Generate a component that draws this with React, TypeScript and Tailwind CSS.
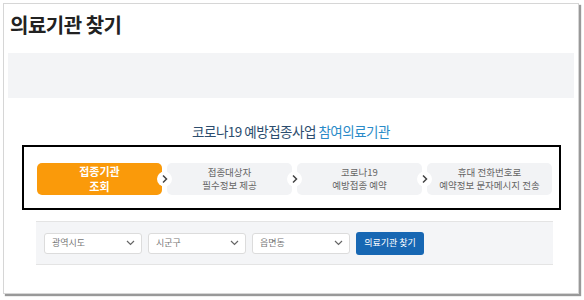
const steps = [
  { lines: ["접종대상자", "필수정보 제공"] },
  { lines: ["코로나19", "예방접종 예약"] },
  { lines: ["휴대 전화번호로", "예약정보 문자메시지 전송"] },
];

function Chevron() {
  return (
    <span className="absolute -left-[10px] top-1/2 -translate-y-1/2 flex h-[15px] w-[15px] items-center justify-center rounded-full bg-white z-10">
      <svg width="6" height="9" viewBox="0 0 6 9" fill="none">
        <path d="M1 1l3.5 3.5L1 8" stroke="#444" strokeWidth="1.5" />
      </svg>
    </span>
  );
}

function Select({ label }: { label: string }) {
  return (
    <div className="flex h-[21px] w-[98px] items-center justify-between rounded-[3px] border border-[#dcdcdc] bg-white pl-[7px] pr-[6px]">
      <span className="text-[9px] text-[#777]">{label}</span>
      <svg width="9" height="6" viewBox="0 0 9 6" fill="none">
        <path d="M1 1l3.5 3.5L8 1" stroke="#666" strokeWidth="1.2" />
      </svg>
    </div>
  );
}

export default function App() {
  return (
    <div
      className="h-[300px] w-[584px] bg-white pl-[3px] pt-[3px]"
      style={{ fontFamily: '"Noto Sans CJK KR", "Noto Sans", sans-serif' }}
    >
      <div className="flex h-[291px] w-[576px] flex-col border border-[#d6d6d6] bg-white shadow-[2px_2px_1px_rgba(0,0,0,0.4)]">
        <h1 className="ml-[6px] mt-[7px] text-[20px] font-bold leading-[28px] tracking-[-0.5px] text-[#222]">
          의료기관 찾기
        </h1>
        <div className="mx-[4px] mt-[14px] h-[45px] bg-[#f3f4f6]" />
        <p className="mt-[24px] text-center text-[13.5px] leading-[18px] tracking-[-0.5px] text-[#2c4d6e]">
          코로나19 예방접종사업 <span className="text-[#2a8bc8]">참여의료기관</span>
        </p>
        <div className="ml-[18px] mt-[5px] w-[539px] border-2 border-black pb-[13px] pl-[13px] pr-[7px] pt-[16px]">
          <div className="flex gap-[5px]">
            <div className="flex h-[32px] flex-1 items-center justify-center rounded-[5px] bg-[#fa9a0a] text-center text-[11px] font-bold leading-[15px] text-white">
              <p>
                접종기관
                <br />
                조회
              </p>
            </div>
            {steps.map((s, i) => (
              <div
                key={i}
                className="relative flex h-[32px] flex-1 items-center justify-center rounded-[5px] bg-[#f2f3f5] text-center text-[9.5px] leading-[13px] text-[#666]"
              >
                <Chevron />
                <p>
                  {s.lines[0]}
                  <br />
                  {s.lines[1]}
                </p>
              </div>
            ))}
          </div>
        </div>
        <div className="ml-[32px] mt-[11px] flex h-[44px] w-[517px] items-center gap-[6px] border-y border-[#e4e4e4] bg-[#f4f5f7] pl-[8px]">
          <Select label="광역시도" />
          <Select label="시군구" />
          <Select label="읍면동" />
          <button className="h-[23px] w-[68px] rounded-[3px] bg-[#1767b3] text-[9px] text-white">
            의료기관 찾기
          </button>
        </div>
      </div>
    </div>
  );
}
